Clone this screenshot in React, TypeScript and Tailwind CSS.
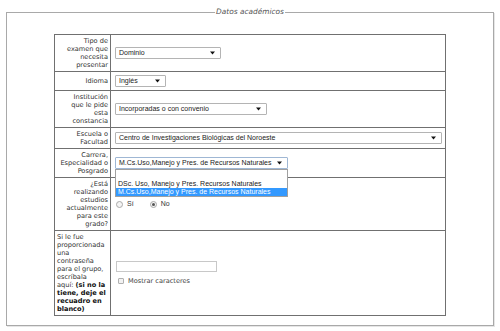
import React from "react";

const label = "font-['DejaVu_Sans',sans-serif] text-[6.6px] leading-[8px] text-[#333] whitespace-nowrap";
const sans = "font-['Liberation_Sans',Arial,sans-serif] text-[7px] text-[#222] whitespace-nowrap";

function Arrow() {
  return (
    <svg width="5" height="4" viewBox="0 0 5 4" className="shrink-0">
      <path d="M0 0.5h5L2.5 3.5z" fill="#111" />
    </svg>
  );
}

function Sel({ w, text, focused }: { w: string; text: string; focused?: boolean }) {
  return (
    <div
      className={`${w} h-[12px] bg-white border ${focused ? "border-[#9fb7d4]" : "border-[#b4b4b4]"} rounded-[1px] flex items-center justify-between pl-[3px] pr-[5px] ${sans}`}
    >
      <span className="leading-[10px]">{text}</span>
      <Arrow />
    </div>
  );
}

function Row({ lbl, children, left }: { lbl: React.ReactNode; children: React.ReactNode; left?: boolean }) {
  return (
    <tr>
      <td className={`border border-[#707070] py-[2px] px-[2px] align-middle ${left ? "text-left" : "text-right"} ${label}`}>{lbl}</td>
      <td className="border border-[#707070] py-[2px] pl-[4px] pr-[2px] align-middle">{children}</td>
    </tr>
  );
}

export default function App() {
  return (
    <div className="w-[500px] h-[331px] bg-white pt-[12px] px-[6px]">
      <div className="relative h-[314px] border border-[#a9a9a9] shadow-[1px_1px_0_#e6e6e6]">
        <div className="absolute top-[-6px] left-1/2 -translate-x-1/2 bg-white px-[1px] font-['DejaVu_Sans',sans-serif] italic text-[7.4px] leading-[10px] text-[#555] whitespace-nowrap">
          Datos académicos
        </div>
        <table className="ml-[47px] mt-[21px] w-[392px] table-fixed border-collapse">
          <colgroup>
            <col className="w-[56px]" />
            <col />
          </colgroup>
          <tbody>
            <Row lbl={<>Tipo de<br />examen que<br />necesita<br />presentar</>}>
              <Sel w="w-[106px]" text="Dominio" />
            </Row>
            <Row lbl="Idioma">
              <div className="h-[14px] flex items-center">
                <Sel w="w-[51px]" text="Inglés" />
              </div>
            </Row>
            <Row lbl={<>Institución<br />que le pide<br />esta<br />constancia</>}>
              <Sel w="w-[152px]" text="Incorporadas o con convenio" />
            </Row>
            <Row lbl={<>Escuela o<br />Facultad</>}>
              <Sel w="w-[327px]" text="Centro de Investigaciones Biológicas del Noroeste" />
            </Row>
            <Row lbl={<>Carrera,<br />Especialidad o<br />Posgrado</>}>
              <div className="relative w-[173px]">
                <Sel w="w-[173px]" text="M.Cs.Uso,Manejo y Pres. de Recursos Naturales" focused />
                <div className={`absolute left-0 top-full z-10 w-[173px] bg-white border border-[#a0a0a0] ${sans}`}>
                  <div className="h-[9px]" />
                  <div className="h-[9px] leading-[9px] pl-[2px]">DSc. Uso, Manejo y Pres. Recursos Naturales</div>
                  <div className="h-[8px] leading-[8px] pl-[2px] bg-[#3399ff] text-white">M.Cs.Uso,Manejo y Pres. de Recursos Naturales</div>
                </div>
              </div>
            </Row>
            <Row lbl={<>¿Está<br />realizando<br />estudios<br />actualmente<br />para este<br />grado?</>}>
              <div className={`flex items-center ${sans} text-[#333]`}>
                <span className="ml-[1px] w-[7px] h-[7px] rounded-full border border-[#a9a9a9] bg-[#f4f4f4]" />
                <span className="ml-[4px]">Sí</span>
                <span className="ml-[16px] w-[7px] h-[7px] rounded-full border border-[#a9a9a9] bg-[#f4f4f4] flex items-center justify-center">
                  <span className="w-[3px] h-[3px] rounded-full bg-[#555]" />
                </span>
                <span className="ml-[4px]">No</span>
              </div>
            </Row>
            <Row
              left
              lbl={
                <>
                  Si le fue<br />proporcionada<br />una<br />contraseña<br />para el grupo,<br />escríbala<br />aquí: <b className="text-[#111]">(si no la</b>
                  <br />
                  <b className="text-[#111]">tiene, deje el</b>
                  <br />
                  <b className="text-[#111]">recuadro en</b>
                  <br />
                  <b className="text-[#111]">blanco)</b>
                </>
              }
            >
              <div className="flex flex-col">
                <div className="ml-[1px] w-[101px] h-[11px] border border-[#c8c8c8] bg-white" />
                <div className="mt-[5px] flex items-center">
                  <span className="ml-[3px] w-[6px] h-[6px] border border-[#b0b0b0] bg-[#f2f2f2] rounded-[1px]" />
                  <span className="ml-[4px] font-['DejaVu_Sans',sans-serif] text-[6.6px] leading-[8px] text-[#444]">Mostrar caracteres</span>
                </div>
              </div>
            </Row>
          </tbody>
        </table>
      </div>
    </div>
  );
}
